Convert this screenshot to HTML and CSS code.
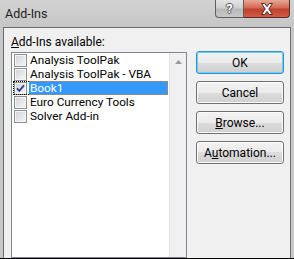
FILE: index.html
```html
<!DOCTYPE html>
<html lang="en">
<head>
    <meta charset="UTF-8" />
    <title>Add-Ins</title>
    <link rel="stylesheet" href="styles.css">
</head>
<body>

    <div class="window">
        <!-- Barra de título -->
        <div class="titlebar">
            <span class="title">Add-Ins</span>
            <div class="caption-btns">
                <div class="cap help">?</div>
                <div class="cap close">
                    <svg width="16" height="14" viewBox="0 0 16 14">
                        <path d="M2.5 1.5h3.2L8 4.6l2.3-3.1h3.2L9.8 7l3.7 5.5h-3.2L8 9.4l-2.3 3.1H2.5L6.2 7z"
                              fill="#fff" stroke="#4a2a26" stroke-width="1" stroke-linejoin="round" />
                    </svg>
                </div>
            </div>
        </div>

        <!-- Conteúdo do diálogo -->
        <div class="client">
            <div class="left">
                <div class="label"><u>A</u>dd-Ins available:</div>
                <div class="listbox">
                    <div class="items">
                        <div class="item">
                            <span class="cell"><span class="check"></span></span>
                            <span class="name">Analysis ToolPak</span>
                        </div>
                        <div class="item">
                            <span class="cell"><span class="check"></span></span>
                            <span class="name">Analysis ToolPak - VBA</span>
                        </div>
                        <div class="item sel">
                            <span class="cell">
                                <span class="check">
                                    <svg width="11" height="11" viewBox="0 0 11 11">
                                        <path d="M2 5.3l2.3 2.6L9 2.3" fill="none" stroke="#2d3f8e" stroke-width="1.8" />
                                    </svg>
                                </span>
                            </span>
                            <span class="name">Book1</span>
                        </div>
                        <div class="item">
                            <span class="cell"><span class="check"></span></span>
                            <span class="name">Euro Currency Tools</span>
                        </div>
                        <div class="item">
                            <span class="cell"><span class="check"></span></span>
                            <span class="name">Solver Add-in</span>
                        </div>
                    </div>
                    <div class="vscroll">
                        <div class="arrow-btn">
                            <svg width="7" height="4" viewBox="0 0 7 4">
                                <path d="M3.5 0L7 4H0z" fill="#9a9a9a" />
                            </svg>
                        </div>
                    </div>
                </div>
            </div>

            <div class="buttons">
                <button class="btn default">OK</button>
                <button class="btn">Cancel</button>
                <button class="btn"><u>B</u>rowse...</button>
                <button class="btn">A<u>u</u>tomation...</button>
            </div>
        </div>
    </div>

</body>
</html>
```

FILE: styles.css
```css
* {
    box-sizing: border-box;
}

body {
    margin: 0;
    font-family: Roboto, "Noto Sans", sans-serif;
    font-size: 12px;
    color: #000;
}

.window {
    width: 294px;
    height: 259px;
    background: #c8c8c8;
    border-bottom: 1px solid #000;
    overflow: hidden;
    display: flex;
    flex-direction: column;
}

/* Barra de título */
.titlebar {
    height: 27px;
    flex-shrink: 0;
    display: flex;
    align-items: flex-start;
    background: linear-gradient(#d2d2d2, #c6c6c6);
}

.title {
    padding: 5px 0 0 5px;
    line-height: 18px;
    font-size: 12.5px;
    color: #1e1e1e;
}

.caption-btns {
    margin-left: auto;
    margin-right: 4px;
    display: flex;
}

.cap {
    height: 18px;
    display: flex;
    align-items: center;
    justify-content: center;
}

.help {
    width: 29px;
    border: 1px solid #5f5f5f;
    border-top: none;
    border-radius: 0 0 0 4px;
    background: linear-gradient(#e4e4e4, #d0d0d0 45%, #b9b9b9 55%, #c8c8c8);
    font-weight: bold;
    font-size: 13px;
    color: #fff;
    text-shadow: 1px 0 #555, -1px 0 #555, 0 1px #555, 0 -1px #555;
}

.close {
    width: 46px;
    border: 1px solid #5a2d27;
    border-top: none;
    border-left: none;
    border-radius: 0 0 4px 0;
    background: linear-gradient(#e7a896, #d36a55 45%, #c0412e 55%, #d25b45);
}

/* Área do diálogo */
.client {
    flex: 1;
    margin: 0 3px;
    border: 1px solid #6c6c6c;
    border-bottom: none;
    background: #f0f0f0;
    display: flex;
    padding: 0 6px 0 7px;
}

.left {
    width: 176px;
    display: flex;
    flex-direction: column;
}

.label {
    padding-top: 7px;
    line-height: 15px;
}

.listbox {
    margin-top: 2px;
    flex: 1;
    border: 1px solid #828790;
    background: #fff;
    display: flex;
}

.items {
    flex: 1;
}

.item {
    display: flex;
    height: 14px;
    margin: 0 1px;
}

.cell {
    position: relative;
    width: 16px;
    padding: 1px 0 0 1px;
}

.check {
    display: block;
    width: 13px;
    height: 13px;
    border: 1px solid #8e8f8f;
    box-shadow: inset 0 0 0 1px #f6f6f6;
    background: linear-gradient(135deg, #cfd2d6, #f8f8f8);
}

.check svg {
    display: block;
}

.name {
    position: relative;
    flex: 1;
    padding-left: 1px;
    font-size: 11.8px;
    line-height: 14px;
    white-space: nowrap;
}

/* Item selecionado */
.item.sel .name {
    background: #3399ff;
    color: #fff;
}

.item.sel .cell::after,
.item.sel .name::after {
    content: "";
    position: absolute;
    top: 0;
    bottom: 0;
    left: 0;
    right: 0;
    border: 1px dotted #000;
}

.item.sel .cell::after {
    border-right: none;
}

.item.sel .name::after {
    border-color: #d9822b;
    border-left: none;
}

/* Barra de rolagem */
.vscroll {
    width: 17px;
    background: #f0f0f0;
    border-left: 1px solid #e2e2e2;
}

.arrow-btn {
    height: 17px;
    display: flex;
    align-items: center;
    justify-content: center;
}

/* Botões */
.buttons {
    margin-left: 9px;
    width: 88px;
    padding-top: 23px;
    display: flex;
    flex-direction: column;
    gap: 7px;
}

.btn {
    height: 23px;
    padding: 0;
    font: inherit;
    color: #000;
    border: 1px solid #707070;
    border-radius: 3px;
    background: linear-gradient(#f2f2f2, #ebebeb 50%, #dddddd 50%, #cfcfcf);
    box-shadow: inset 0 0 0 1px #fcfcfc;
}

.btn.default {
    border-color: #3c8cc6;
    box-shadow: inset 0 0 0 1px #62d2f6;
}
```
